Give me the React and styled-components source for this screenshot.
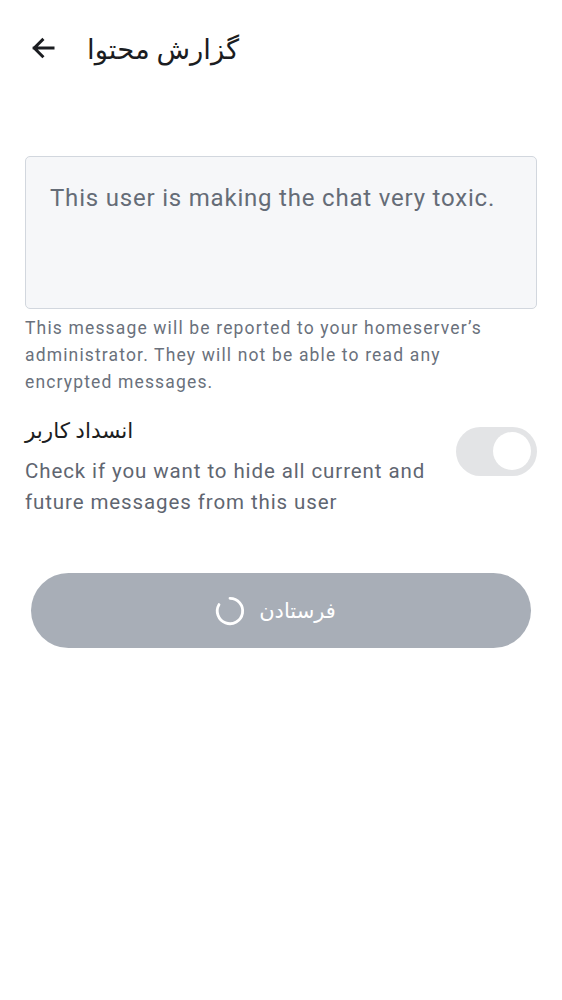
import styled, { createGlobalStyle } from "styled-components";

const Global = createGlobalStyle`
  html, body {
    margin: 0;
    padding: 0;
    background: #ffffff;
    font-family: Roboto, "Noto Sans", "DejaVu Sans", sans-serif;
  }
`;

const Page = styled.div`
  width: 562px;
  min-height: 1000px;
  background: #fff;
  display: flex;
  flex-direction: column;
`;

const TopBar = styled.header`
  height: 100px;
  display: flex;
  align-items: center;
  padding: 0 0 0 28px;
  gap: 29px;
  box-sizing: border-box;
  margin-top: -2px;
`;

const BackButton = styled.button`
  border: none;
  background: none;
  padding: 0;
  display: flex;
  align-items: center;
  color: #1b1d21;
  cursor: pointer;
`;

const Title = styled.h1`
  margin: 0;
  font-size: 27.5px;
  font-weight: 400;
  color: #1b1d21;
  direction: rtl;
  position: relative;
  top: 1px;
`;

const Content = styled.main`
  display: flex;
  flex-direction: column;
  padding: 58px 25px 0;
`;

const ReasonBox = styled.div`
  height: 153px;
  box-sizing: border-box;
  border: 1.5px solid #d2d7de;
  border-radius: 5px;
  background: #f6f7f9;
  padding: 27px 24px;
  font-size: 24px;
  color: #656c77;
  letter-spacing: 0.8px;
`;

const Helper = styled.p`
  margin: 6px 0 0;
  max-width: 500px;
  font-size: 17.5px;
  line-height: 27px;
  letter-spacing: 1.15px;
  color: #6a717c;
`;

const OptionRow = styled.div`
  display: flex;
  align-items: center;
  justify-content: space-between;
  margin-top: 20px;
  gap: 24px;
`;

const OptionText = styled.div`
  display: flex;
  flex-direction: column;
`;

const OptionLabel = styled.div`
  font-size: 21.5px;
  color: #1b1d21;
  direction: rtl;
  align-self: flex-start;
  line-height: 30px;
`;

const OptionDesc = styled.div`
  margin-top: 10px;
  font-size: 20.5px;
  line-height: 31px;
  color: #5f6671;
  letter-spacing: 0.9px;
  max-width: 420px;
`;

const Track = styled.div`
  flex-shrink: 0;
  width: 81px;
  height: 49px;
  border-radius: 25px;
  background: #e3e4e6;
  display: flex;
  align-items: center;
  justify-content: ${(p) => (p.$on ? "flex-end" : "flex-start")};
  padding: 0 6px;
  box-sizing: border-box;
  margin-top: -32px;
`;

const Thumb = styled.div`
  width: 38px;
  height: 38px;
  border-radius: 50%;
  background: #ffffff;
`;

const SubmitButton = styled.button`
  margin: 55px 6px 0;
  height: 75px;
  border: none;
  border-radius: 38px;
  background: #a8aeb7;
  color: #ffffff;
  font-family: inherit;
  font-size: 21px;
  display: flex;
  align-items: center;
  justify-content: center;
  gap: 13px;
  padding: 0 12px 0 0;
`;

const Spinner = () => (
  <svg width="32" height="32" viewBox="0 0 34 34">
    <path
      d="M17 3.5 A13.5 13.5 0 1 1 5.3 10.2"
      fill="none"
      stroke="#ffffff"
      strokeWidth="3"
      strokeLinecap="round"
    />
  </svg>
);

export default function App() {
  return (
    <Page>
      <Global />
      <TopBar>
        <BackButton aria-label="back">
          <svg width="30" height="30" viewBox="0 0 24 24">
            <path
              d="M20 12H5M11.5 5.5L5 12l6.5 6.5"
              fill="none"
              stroke="currentColor"
              strokeWidth="2.4"
              strokeLinecap="square"
            />
          </svg>
        </BackButton>
        <Title>گزارش محتوا</Title>
      </TopBar>
      <Content>
        <ReasonBox>This user is making the chat very toxic.</ReasonBox>
        <Helper>
          This message will be reported to your homeserver’s administrator.
          They will not be able to read any encrypted messages.
        </Helper>
        <OptionRow>
          <OptionText>
            <OptionLabel>انسداد کاربر</OptionLabel>
            <OptionDesc>
              Check if you want to hide all current and future messages from
              this user
            </OptionDesc>
          </OptionText>
          <Track $on>
            <Thumb />
          </Track>
        </OptionRow>
        <SubmitButton disabled>
          <Spinner />
          <span>فرستادن</span>
        </SubmitButton>
      </Content>
    </Page>
  );
}
